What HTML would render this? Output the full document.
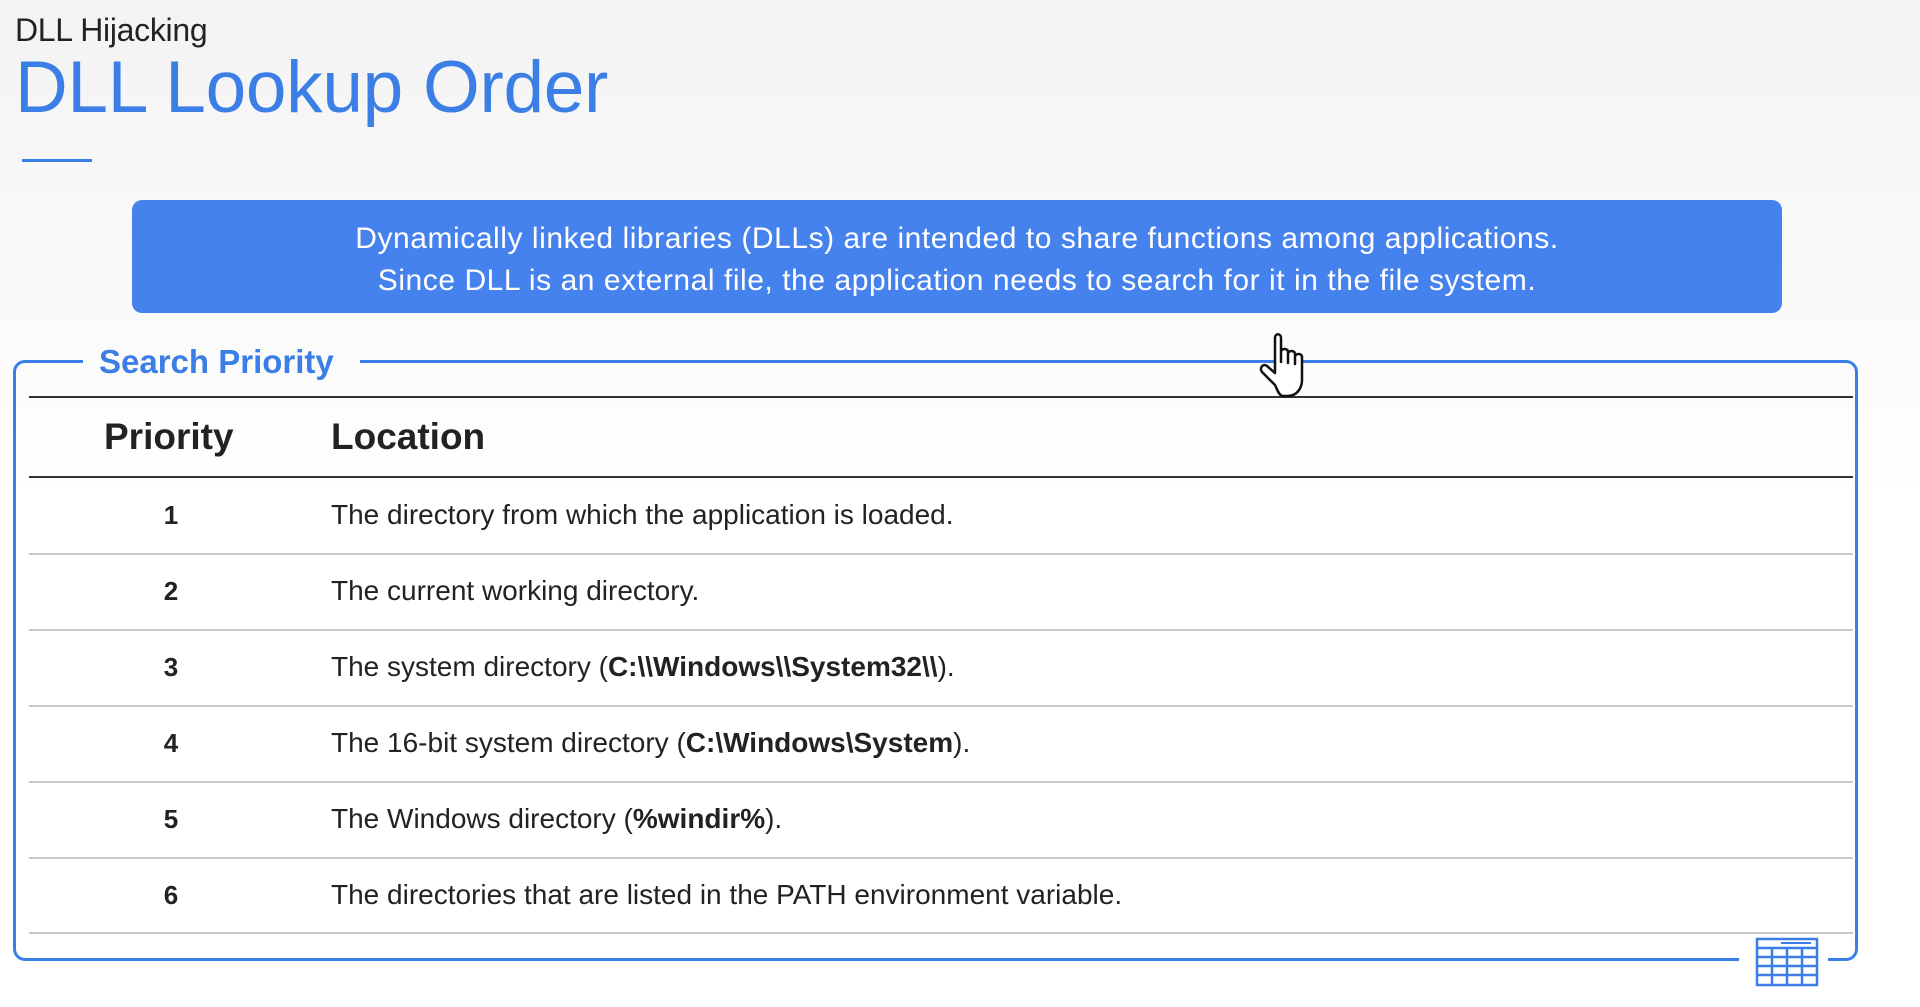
<!DOCTYPE html>
<html><head><meta charset="utf-8"><style>
*{margin:0;padding:0;box-sizing:border-box}
body{width:1920px;height:1007px;overflow:hidden;background:linear-gradient(#f3f3f3,#fafafa 300px,#fff 500px);font-family:"Liberation Sans",sans-serif;position:relative;color:#222}
.abs{position:absolute}
.sub{left:15px;top:12px;font-size:32px;color:#222;letter-spacing:-0.3px}
.title{left:15px;top:46px;font-size:73px;color:#3b7ee6;letter-spacing:-0.3px}
.bar{left:22px;top:159px;width:70px;height:3px;background:#3b7ee6}
.box{left:132px;top:200px;width:1650px;height:113px;background:#4682ee;border-radius:10px;color:#fff;font-size:30px;text-align:center;padding-top:18px;line-height:42px;letter-spacing:0.55px}
.frame{left:13px;top:360px;width:1845px;height:601px;border:3px solid #3b7ee6;border-radius:12px}
.gap{background:#fff}
.sp{left:99px;top:343px;font-size:33px;font-weight:bold;color:#3b7ee6}
.line{left:29px;width:1824px}
.cell{font-size:28px;color:#222}
.num{width:100px;text-align:center;left:121px;font-weight:bold;font-size:26px}
.loc{left:331px}
</style></head><body>
<div class="abs sub">DLL Hijacking</div>
<div class="abs title">DLL Lookup Order</div>
<div class="abs bar"></div>
<div class="abs box">Dynamically linked libraries (DLLs) are intended to share functions among applications.<br>Since DLL is an external file, the application needs to search for it in the file system.</div>
<div class="abs frame"></div>
<div class="abs gap" style="left:83px;top:350px;width:277px;height:20px;background:#fcfcfc"></div>
<div class="abs gap" style="left:1739px;top:950px;width:89px;height:20px"></div>
<div class="abs sp">Search Priority</div>
<div class="abs line" style="top:396px;height:2px;background:#333"></div>
<div class="abs" style="left:104px;top:416px;font-size:37px;font-weight:bold;color:#222">Priority</div>
<div class="abs" style="left:331px;top:416px;font-size:37px;font-weight:bold;color:#222">Location</div>
<div class="abs line" style="top:476px;height:2px;background:#333"></div>
<div class="abs line" style="top:553px;height:2px;background:#c8c8c8"></div>
<div class="abs line" style="top:629px;height:2px;background:#c8c8c8"></div>
<div class="abs line" style="top:705px;height:2px;background:#c8c8c8"></div>
<div class="abs line" style="top:781px;height:2px;background:#c8c8c8"></div>
<div class="abs line" style="top:857px;height:2px;background:#c8c8c8"></div>
<div class="abs line" style="top:932px;height:2px;background:#c8c8c8"></div>
<div class="abs cell num" style="top:500px">1</div><div class="abs cell loc" style="top:499px">The directory from which the application is loaded.</div>
<div class="abs cell num" style="top:576px">2</div><div class="abs cell loc" style="top:575px">The current working directory.</div>
<div class="abs cell num" style="top:652px">3</div><div class="abs cell loc" style="top:651px">The system directory (<b>C:\\Windows\\System32\\</b>).</div>
<div class="abs cell num" style="top:728px">4</div><div class="abs cell loc" style="top:727px">The 16-bit system directory (<b>C:\Windows\System</b>).</div>
<div class="abs cell num" style="top:804px">5</div><div class="abs cell loc" style="top:803px">The Windows directory (<b>%windir%</b>).</div>
<div class="abs cell num" style="top:880px">6</div><div class="abs cell loc" style="top:879px">The directories that are listed in the PATH environment variable.</div>
<svg class="abs" style="left:1755px;top:937px" width="64" height="50" viewBox="0 0 64 50" fill="none" stroke="#3b7ee6" stroke-width="2.5">
<rect x="2" y="2" width="60" height="46"/>
<line x1="2" y1="11" x2="62" y2="11"/><line x1="2" y1="20" x2="62" y2="20"/><line x1="2" y1="29" x2="62" y2="29"/><line x1="2" y1="38" x2="62" y2="38"/>
<line x1="17" y1="11" x2="17" y2="48"/><line x1="32" y1="11" x2="32" y2="48"/><line x1="47" y1="11" x2="47" y2="48"/>
<line x1="26" y1="6" x2="56" y2="6" stroke-width="2"/>
</svg>
<svg class="abs" style="left:1258px;top:332px" width="56" height="68" viewBox="0 0 56 68">
<path d="M17 53 L4 40 C1 36 5 31 9 34 L17 41 L17 6 C17 1 23 1 23 6 L23 30 L23 20 C23 16 30 16 30 20 L30 31 L30 22 C30 18 37 18 37 22 L37 32 L37 25 C37 21 44 21 44 25 L44 48 C44 57 38 64 30 64 L25 64 C21 64 19 57 17 53 Z" fill="#fff" stroke="#111" stroke-width="2.5" stroke-linejoin="round"/>
</svg>
</body></html>
